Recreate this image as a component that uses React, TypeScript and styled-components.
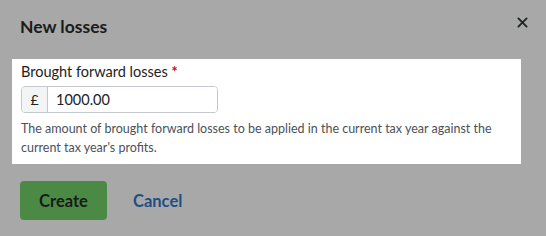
import styled, { createGlobalStyle } from "styled-components";

const GlobalStyle = createGlobalStyle`
	html, body {
		margin: 0;
		padding: 0;
		background: #a8a8a8;
	}
	body {
		font-family: "Lato", "Liberation Sans", sans-serif;
	}
`;

export default function App() {
	return (
		<>
			<GlobalStyle />
			<Page>
				<Header>
					<Title>New losses</Title>
					<CloseButton aria-label="Close">
						<svg width="11" height="11" viewBox="0 0 12 12">
							<path d="M1.5 1.5 L10.5 10.5 M10.5 1.5 L1.5 10.5" stroke="#1f2326" strokeWidth="2" strokeLinecap="round" />
						</svg>
					</CloseButton>
				</Header>
				<Highlight>
					<Label>
						Brought forward losses <Required>*</Required>
					</Label>
					<InputGroup>
						<Prefix>£</Prefix>
						<Input defaultValue="1000.00" />
					</InputGroup>
					<Help>
						The amount of brought forward losses to be applied in the current tax year against the
						current tax year's profits.
					</Help>
				</Highlight>
				<Actions>
					<CreateButton>Create</CreateButton>
					<CancelLink>Cancel</CancelLink>
				</Actions>
			</Page>
		</>
	);
}

const Page = styled.div`
	width: 546px;
	height: 236px;
	background: #a8a8a8;
	display: flex;
	flex-direction: column;
`;

const Header = styled.div`
	display: flex;
	justify-content: space-between;
	align-items: flex-start;
	height: 59px;
	padding: 17px 18px 0 20px;
	box-sizing: border-box;
`;

const Title = styled.h2`
	margin: 0;
	font-size: 17.5px;
	line-height: 20px;
	font-weight: 700;
	color: #1b1b1b;
`;

const CloseButton = styled.button`
	display: flex;
	align-items: center;
	justify-content: center;
	padding: 0;
	border: none;
	background: none;
`;

const Highlight = styled.div`
	width: 509px;
	margin-left: 12px;
	box-sizing: border-box;
	background: #ffffff;
	padding: 3px 9px 7px;
`;

const Label = styled.div`
	font-size: 14.5px;
	line-height: 20px;
	color: #222;
`;

const Required = styled.span`
	color: #d0021b;
	font-weight: 700;
`;

const InputGroup = styled.div`
	display: flex;
	width: 197px;
	height: 27px;
	margin-top: 4px;
	border: 1px solid #c4c8cc;
	border-radius: 4px;
	box-sizing: border-box;
	overflow: hidden;
`;

const Prefix = styled.span`
	display: flex;
	align-items: center;
	justify-content: center;
	width: 25px;
	background: #f3f4f5;
	border-right: 1px solid #c4c8cc;
	font-size: 14px;
	color: #222;
`;

const Input = styled.input`
	flex: 1;
	min-width: 0;
	border: none;
	outline: none;
	padding: 0 8px;
	font-family: inherit;
	font-size: 14.5px;
	color: #222;
`;

const Help = styled.p`
	margin: 6px 0 0;
	font-size: 12.5px;
	line-height: 19px;
	color: #4b5159;
`;

const Actions = styled.div`
	display: flex;
	align-items: center;
	gap: 26px;
	padding: 17px 20px 0;
`;

const CreateButton = styled.button`
	width: 87px;
	height: 39px;
	border: none;
	border-radius: 4px;
	background: #4a8a45;
	color: #1a1a1a;
	font-family: inherit;
	font-size: 16.5px;
	font-weight: 700;
`;

const CancelLink = styled.a`
	color: #1d4f85;
	font-size: 16.5px;
	font-weight: 700;
	cursor: pointer;
`;
